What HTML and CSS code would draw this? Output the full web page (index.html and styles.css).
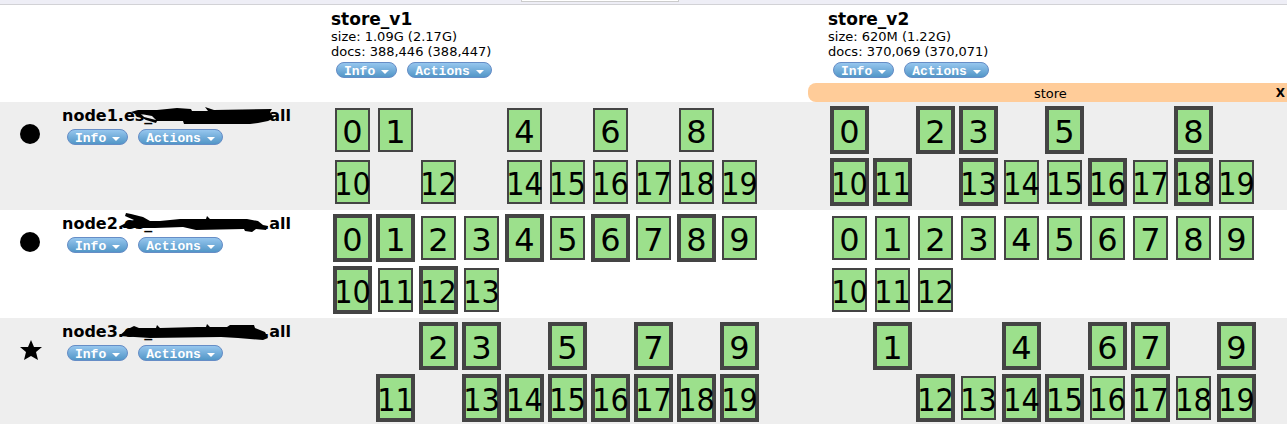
FILE: index.html
```
<!DOCTYPE html>
<html lang="en">
<head>
<meta charset="utf-8">
<title>Cluster overview</title>
<link rel="stylesheet" href="styles.css">
</head>
<body>
<div class="toolbar"><div class="toolbar-field"></div></div>
<table class="cluster">
<colgroup><col class="col-node"><col class="col-index"><col></colgroup>
<thead>
<tr>
<td></td>
<th scope="col"><div class="index">
<div class="title">store_v1</div>
<div>size: 1.09G (2.17G)</div>
<div>docs: 388,446 (388,447)</div>
<div class="actions"><button class="pill">Info</button><button class="pill">Actions</button></div>
</div></th>
<th scope="col"><div class="index">
<div class="title">store_v2</div>
<div>size: 620M (1.22G)</div>
<div>docs: 370,069 (370,071)</div>
<div class="actions"><button class="pill">Info</button><button class="pill">Actions</button></div>
</div>
<div class="alias"><span class="alias-name">store</span><button class="alias-remove">X</button></div></th>
</tr>
</thead>
<tbody id="nodes"></tbody>
</table>
<script src="cluster.js"></script>
</body>
</html>
```
FILE: styles.css
```
* { box-sizing: border-box; }
body {
  margin: 0;
  background: #fff;
  color: #000;
  font: 13px/15px "DejaVu Sans", Verdana, sans-serif;
  overflow: hidden;
}
button { font: inherit; color: inherit; border: 0; background: none; padding: 0; }
.toolbar {
  height: 5px;
  background: #eeeef6;
  border-bottom: 1px solid #d2d2d6;
  display: flex;
  justify-content: center;
  align-items: flex-start;
  padding-right: 88px;
}
.toolbar-field {
  width: 158px;
  height: 2px;
  background: #fff;
  border: 1px solid #ccc;
  border-top: 0;
}
.cluster { width: 100%; border-collapse: collapse; table-layout: fixed; }
.col-node { width: 311px; }
.col-index { width: 497px; }
td, th { padding: 0; text-align: left; vertical-align: top; font-weight: normal; }
.index { padding: 5px 20px 5px; }
.title { font-size: 16px; line-height: 18px; font-weight: bold; white-space: nowrap; }
.index .title { font-size: 17px; margin-bottom: 1px; }
.actions { display: flex; gap: 10px; padding: 3px 5px 0; }
.pill {
  display: flex;
  align-items: center;
  gap: 6px;
  height: 16px;
  padding: 3px 7px 0;
  border: 1px solid #668dc6;
  border-radius: 8px;
  background: linear-gradient(#96c6ee, #5296c7);
  color: #fff;
  font: bold 13px/13px "Liberation Mono", "Courier New", monospace;
}
.pill::after {
  content: "";
  border: 4px solid transparent;
  border-top-color: #fff;
  border-bottom: 0;
}
.alias {
  display: flex;
  align-items: center;
  height: 19px;
  padding: 1px 2px 0 17px;
  background: #fc9;
  border-radius: 8px 0 0 8px;
}
.alias-name { flex: 1; text-align: center; }
.alias-remove { font-size: 12px; font-weight: bold; }
tbody tr:nth-child(odd) { background: #eee; }
.node { display: flex; height: 108px; }
.node-icon { width: 20px; padding-top: 22px; margin: 0 22px 0 20px; }
.node-icon svg { display: block; }
.node .title { display: flex; position: relative; }
.node .title-tail { margin-left: auto; }
.node-info { width: 229px; padding-top: 5px; }
.node-info .actions { padding-top: 4px; }
.scribble { position: absolute; left: 56px; top: -5px; }
.shards {
  display: grid;
  grid-template-columns: repeat(10, 39px);
  grid-auto-rows: 48px;
  gap: 4px;
  padding: 4px 22px;
}
.shard {
  margin: 2px;
  padding-top: 4px;
  border: 2px solid #444;
  background: #9ce08c;
  display: flex;
  align-items: center;
  justify-content: center;
  font-size: 32px;
  line-height: 36px;
}
.shard.wide { font-family: "DejaVu Sans Condensed", "Noto Sans", sans-serif; }
.shard.primary { margin: 0; border-width: 4px; }
```
FILE: cluster.js
```
// Shards of each node, one string of ids per index; "*" marks a primary.
const nodes = [
  { name: "node1.", icon: "dot", shards: ["0 1 4 6 8 10 12 14 15 16 17 18 19", "0* 2* 3* 5* 8* 10* 11* 13* 14 15 16* 17 18* 19"],
    ink: "M13 10 20 8 39 8 59 6 73 7 74 9 90 9 87 5 96 8 154 7 152 10 156 16 150 19 140 21 132 22 66 22 65 19 39 19 38 21 28 18 19 13ZM23 12 26 15 38 18 34 14Z" },
  { name: "node2.", icon: "dot", shards: ["0* 1* 2 3 4* 5 6* 7 8* 9 10* 11 12* 13", "0 1 2 3 4 5 6 7 8 9 10 11 12"],
    ink: "M8 3 13 4 25 7 32 11 42 11 62 9 88 9 89 6 92 9 129 9 140 11 145 15 150 16 148 20 138 19 134 22 127 21 126 19 78 20 65 17 37 18 18 18 6 18 2 16 12 11 16 10 7 6Z" },
  { name: "node3.", icon: "star", shards: ["2* 3* 5* 7* 9* 11* 13* 14* 15* 16* 17* 18* 19*", "1* 4* 6* 7* 9* 12* 13 14* 15* 16 17* 18 19*"],
    ink: "M1 18 8 12 16 8 21 10 38 10 39 7 42 10 79 9 88 9 89 6 92 9 109 9 112 7 136 7 137 10 147 14 150 20 145 22 120 20 103 19 32 20Z" }
];
const icons = {
  dot: '<svg width="20" height="20"><circle cx="10" cy="10" r="10"/></svg>',
  star: '<svg width="22" height="20"><path d="M11 0 14 7 22 7 16 12 18 20 11 16 4 20 6 12 0 7 8 7Z"/></svg>'
};
const shard = s => {
  const id = parseInt(s, 10);
  const cls = "shard" + (s.endsWith("*") ? " primary" : "") + (id > 9 ? " wide" : "");
  return `<div class="${cls}" style="grid-area:${Math.floor(id / 10) + 1}/${id % 10 + 1}">${id}</div>`;
};
document.getElementById("nodes").innerHTML = nodes.map(n => `<tr>
<td><div class="node"><div class="node-icon">${icons[n.icon]}</div><div class="node-info">
<div class="title"><span>${n.name}es_</span><svg class="scribble" width="160" height="26" fill-rule="evenodd"><path d="${n.ink}"/></svg><span class="title-tail">.all</span></div>
<div class="actions"><button class="pill">Info</button><button class="pill">Actions</button></div>
</div></div></td>
${n.shards.map(l => `<td><div class="shards">${l.split(" ").map(shard).join("")}</div></td>`).join("")}</tr>`).join("");
```
